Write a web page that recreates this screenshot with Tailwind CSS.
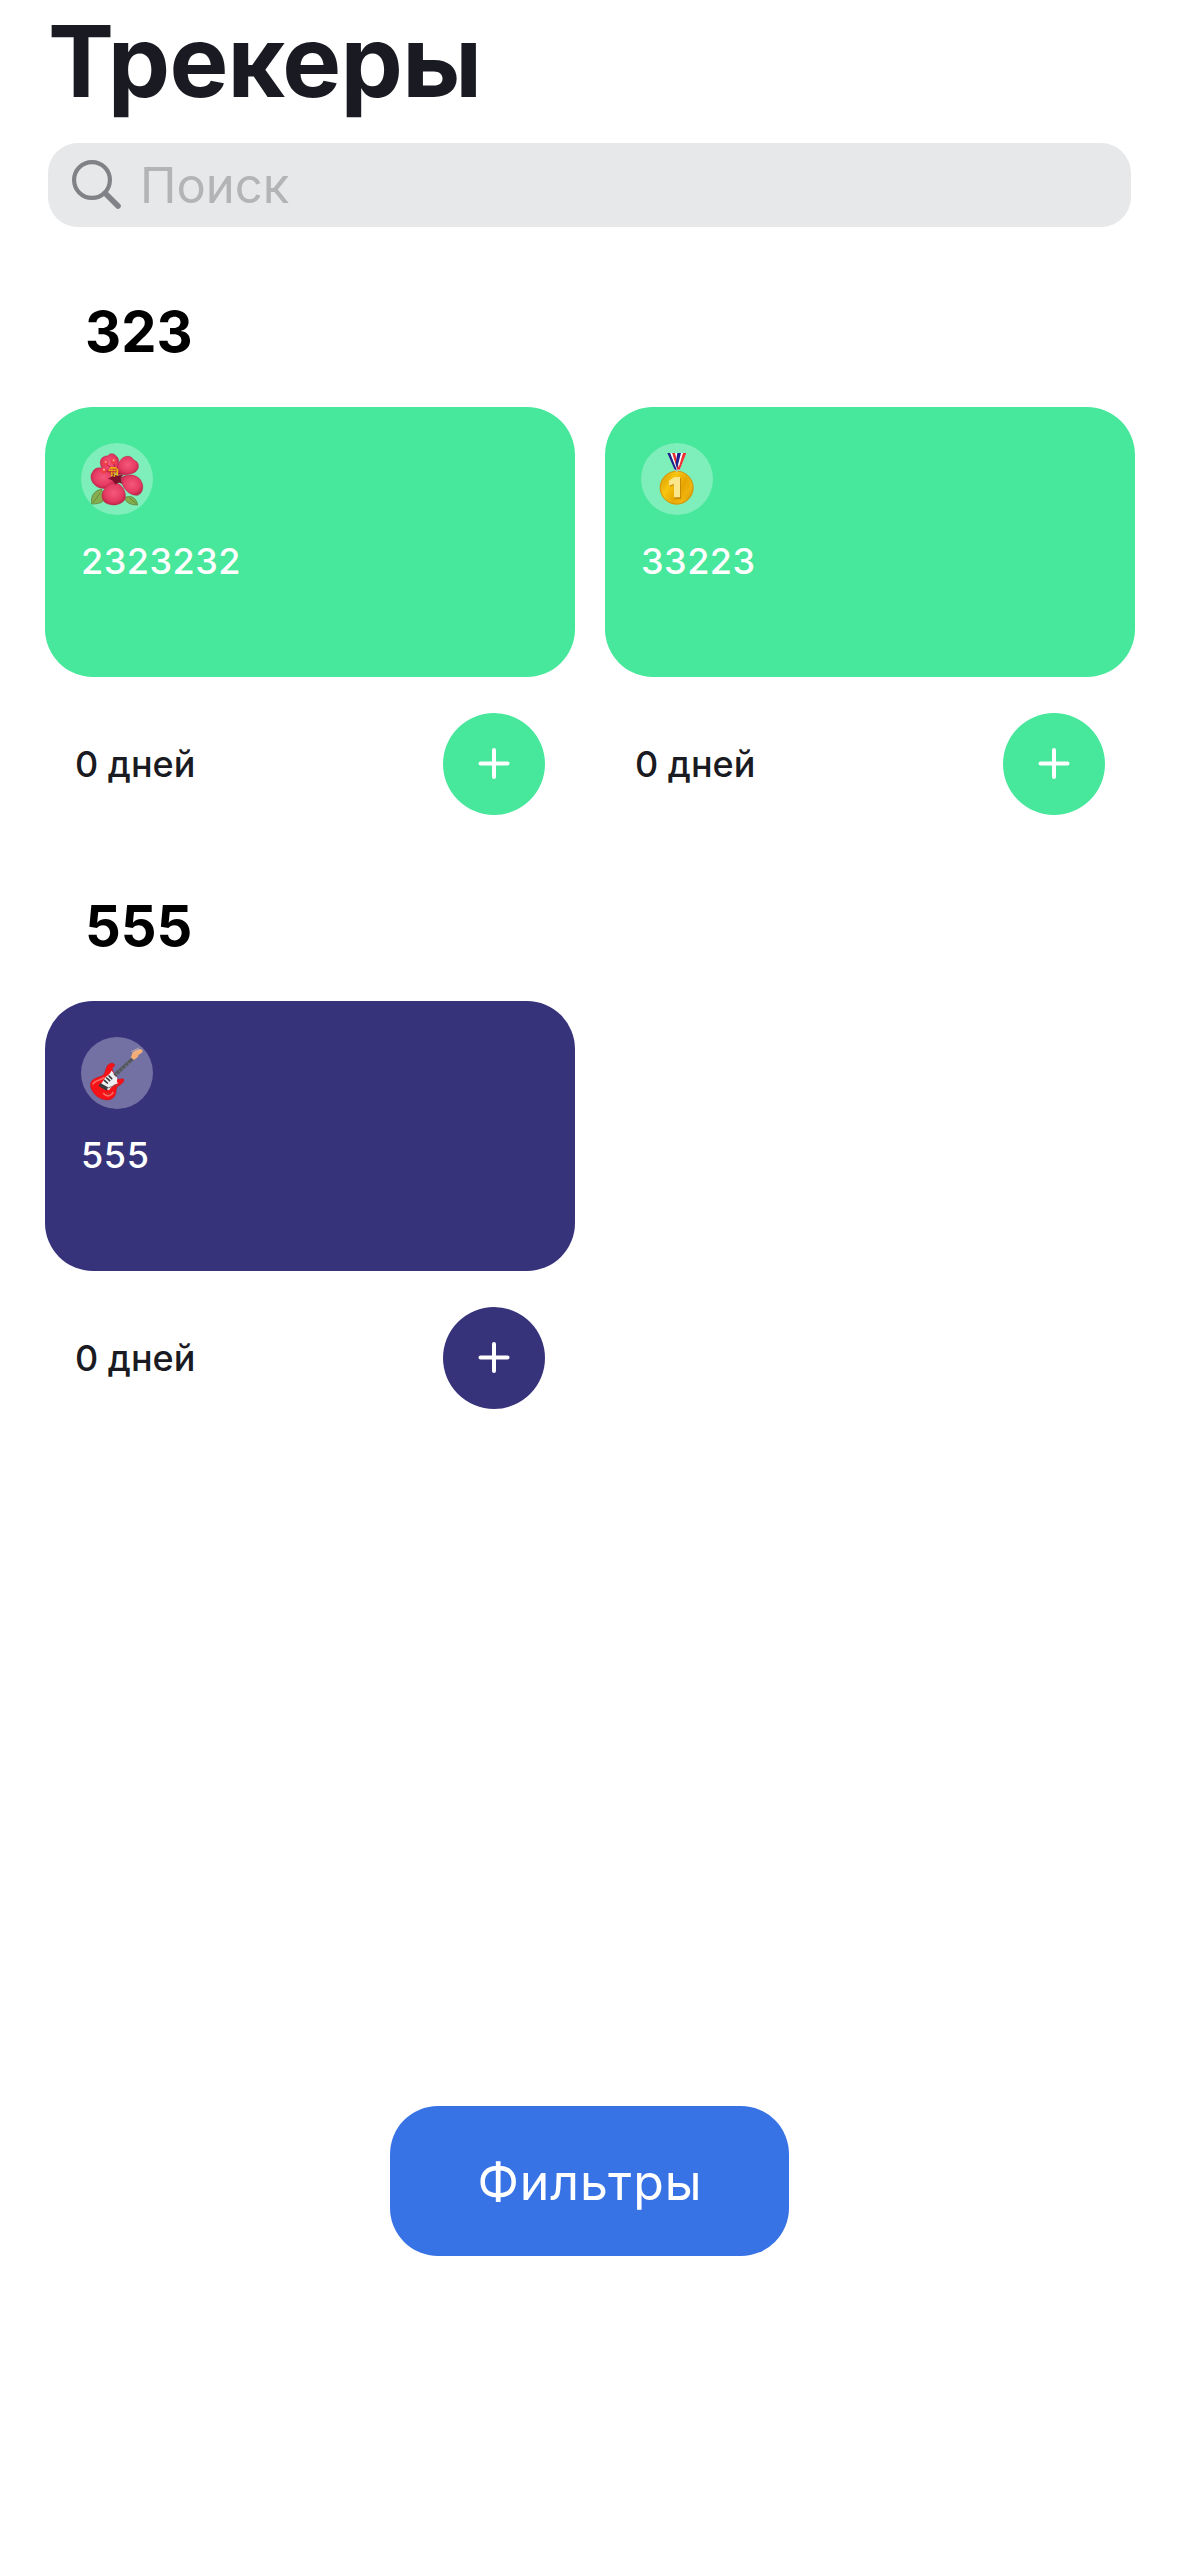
<!DOCTYPE html>
<html lang="ru">
<head>
<meta charset="utf-8">
<title>Трекеры</title>
<script src="https://cdn.jsdelivr.net/npm/@tailwindcss/browser@4"></script>
</head>
<body class="bg-white font-['Inter',sans-serif]">
<div class="flex h-[2556px] w-[1179px] flex-col overflow-hidden bg-white">
  <header class="px-12">
    <h1 class="h-[143px] pt-px text-[99px] leading-[120px] font-bold tracking-[-0.75px] text-[#1a1b22]">Трекеры</h1>
    <div class="flex h-[84px] items-center rounded-[30px] bg-[#e6e8e9] pl-[22px]">
      <svg class="size-[54px] shrink-0" viewBox="0 0 54 54" fill="none" stroke="#808287" stroke-linecap="round">
        <circle cx="22" cy="22" r="17.9" stroke-width="4.2"/>
        <path d="M35.2 35.2 48 48" stroke-width="5.6"/>
      </svg>
      <span class="ml-4 pt-0.5 text-[49px] leading-[60px] text-[#b2b4b6]">Поиск</span>
    </div>
  </header>

  <main class="flex-none">
    <section class="pr-11 pb-1.5 pl-[45px]">
      <h2 class="pt-[69px] pb-[39px] pl-10 text-[56px] leading-[72px] font-bold text-black">323</h2>
      <div class="grid grid-cols-2 gap-[30px]">
        <article>
          <div class="h-[270px] rounded-[48px] bg-[#47e79c] p-9">
            <svg class="size-[72px]" viewBox="18 24 216 216">
              <defs>
                <radialGradient id="petal" cx=".5" cy=".45" r=".6"><stop offset="0" stop-color="#f5587c"/><stop offset=".65" stop-color="#e53a62"/><stop offset="1" stop-color="#b81f45"/></radialGradient>
              </defs>
              <circle cx="126" cy="132" r="108" fill="#fff" fill-opacity=".3"/>
              <g fill="#86ad50" stroke="#55782f" stroke-width="2">
                <path d="M80 163C59 166 46 182 50 207 70 207 84 203 88 193Z"/>
                <path d="M148 188C165 181 183 184 188 210 169 210 153 204 148 188Z"/>
                <path d="M54 203 76 174M184 206 164 189" fill="none"/>
              </g>
              <g fill="url(#petal)" stroke="#b72149" stroke-width="1.5">
                <path d="M119 118C98 119 74 102 76 80 78 66 91 62 98 63 104 54 117 53 124 64 135 70 133 99 119 118Z"/>
                <path d="M126 119C123 95 134 69 151 65 164 61 173 68 176 75 190 79 194 94 187 104 180 118 150 121 126 119Z"/>
                <path d="M121 144C112 164 75 166 59 149 48 141 44 120 53 111 59 95 82 95 94 107 108 115 117 126 121 144Z"/>
                <path d="M138 128C162 113 193 120 200 142 208 158 201 177 187 181 164 183 139 159 138 128Z"/>
                <path d="M120 144C139 145 156 170 150 191 144 207 119 214 100 207 79 202 76 178 88 163 96 148 109 144 120 144Z"/>
              </g>
              <path d="M111 112C119 126 132 119 145 120 132 128 140 139 142 148 132 140 128 143 121 150 120 140 109 134 98 130 108 127 117 128 111 112Z" fill="#7e0f2d"/>
              <path d="M90 108 119 111M92 86 119 106M116 82 121 108" stroke="#b51d3d" stroke-width="3"/>
              <g fill="none" stroke="#e9b800" stroke-width="5" stroke-dasharray="5 3"><path d="M104 99H128M101 106H132M110 96V124M118 96V127M127 101V125M108 116H132"/></g>
              <g fill="#ee3f49"><circle cx="91" cy="84" r="8.5"/><circle cx="115" cy="79" r="8.5"/><circle cx="86" cy="107" r="8.5"/></g>
              <g fill="#ffa39c"><circle cx="92" cy="81" r="3.2"/><circle cx="116" cy="76" r="3.2"/><circle cx="87" cy="104" r="3.2"/></g>
            </svg>
            <p class="mt-6 text-[36px] leading-[44px] font-[450] tracking-[0.5px] text-white">2323232</p>
          </div>
          <div class="flex items-center justify-between px-[30px] pt-9">
            <span class="text-[36px] leading-[44px] font-medium text-[#1a1b22]">0 дней</span>
            <button class="flex size-[102px] items-center justify-center rounded-full bg-[#47e79c]">
              <svg class="size-9" viewBox="0 0 36 36" stroke="#fff" stroke-width="4" stroke-linecap="round"><path d="M4.5 17.5H31.5M18 4V31"/></svg>
            </button>
          </div>
        </article>
        <article>
          <div class="h-[270px] rounded-[48px] bg-[#47e79c] p-9">
            <svg class="size-[72px]" viewBox="18 24 216 216">
              <defs>
                <linearGradient id="gold" x1="0" y1=".2" x2="1" y2=".8"><stop offset="0" stop-color="#d99a00"/><stop offset=".3" stop-color="#f8c50e"/><stop offset=".6" stop-color="#e7a400"/><stop offset=".8" stop-color="#f0b20c"/><stop offset="1" stop-color="#d18b00"/></linearGradient>
              </defs>
              <circle cx="126" cy="132" r="108" fill="#fff" fill-opacity=".3"/>
              <path d="M112 54H154L133 104H126Z" fill="#fff"/>
              <path d="M111 54H120L133 104H126ZM144 54H154L134 104H129Z" fill="#ee2f31"/>
              <path d="M97 54H106L125 104H119ZM127 54H138L125 104H119Z" fill="#20208c"/>
              <path d="M106 54H111L127 104H125Z" fill="#fff"/>
              <circle cx="125" cy="158" r="49.5" fill="url(#gold)" stroke="#d49504" stroke-width="3"/>
              <circle cx="125" cy="157" r="44" fill="none" stroke="#f7cc34" stroke-opacity=".5" stroke-width="2"/>
              <path d="M118 104 125 110 133 104" fill="none" stroke="#c8ced0" stroke-width="3"/>
              <path d="M121 128H137V190H118V148L103 153V137Z" fill="#c78a06" transform="translate(1 2)"/>
              <path d="M119 126H135V187H117V147L102 152V137Z" fill="#fae78c"/>
            </svg>
            <p class="mt-6 text-[36px] leading-[44px] font-[450] tracking-[0.5px] text-white">33223</p>
          </div>
          <div class="flex items-center justify-between px-[30px] pt-9">
            <span class="text-[36px] leading-[44px] font-medium text-[#1a1b22]">0 дней</span>
            <button class="flex size-[102px] items-center justify-center rounded-full bg-[#47e79c]">
              <svg class="size-9" viewBox="0 0 36 36" stroke="#fff" stroke-width="4" stroke-linecap="round"><path d="M4.5 17.5H31.5M18 4V31"/></svg>
            </button>
          </div>
        </article>
      </div>
    </section>

    <section class="pr-11 pb-1.5 pl-[45px]">
      <h2 class="pt-[69px] pb-[39px] pl-10 text-[56px] leading-[72px] font-bold text-black">555</h2>
      <div class="grid grid-cols-2 gap-[30px]">
        <article>
          <div class="h-[270px] rounded-[48px] bg-[#37337b] p-9">
            <svg class="size-[72px]" viewBox="18 21 216 216">
              <circle cx="126" cy="129" r="108" fill="#fff" fill-opacity=".3"/>
              <path d="M64 190 69 199M62 194 70 191" stroke="#3d3a45" stroke-width="3"/>
              <path d="M107 100C116 98 120 103 119 108 108 112 112 124 119 133L128 148C138 150 141 143 146 148 149 155 139 163 130 168 120 174 127 186 119 198 111 211 94 213 76 205 57 196 44 176 47 160 50 145 69 143 82 137 94 132 89 106 107 100Z" fill="#f51318" stroke="#c90e18" stroke-width="1.5"/>
              <path d="M54 162C60 150 77 151 87 143M86 191C95 201 108 199 114 188" fill="none" stroke="#ff6a62" stroke-width="5" stroke-linecap="round"/>
              <path d="M109 122C118 128 115 135 125 141 130 147 122 155 130 160 115 162 110 173 101 181L73 166C83 159 86 147 93 140 101 134 105 132 109 122Z" fill="#eef0f2"/>
              <path d="M115 132 169 83 176 89 123 140Z" fill="#55585b"/>
              <path d="M123 129 128 135M131 121 137 127M140 113 146 119M149 105 155 111M158 97 164 103" stroke="#9a9c9f" stroke-width="1.5"/>
              <path d="M167 82C172 77 168 70 177 64 186 59 194 55 201 59 207 64 199 70 190 75 191 82 184 83 177 90Z" fill="#f3ad75"/>
              <path d="M168 65 193 53M174 69 196 58" stroke="#c9bdbc" stroke-width="2"/>
              <path d="M88 151 97 159M95 144 104 152M102 138 110 146" stroke="#34343b" stroke-width="5" stroke-linecap="round"/>
              <path d="M76 159 99 172 95 182 71 168Z" fill="#39393e"/>
              <path d="M99 174 128 163M98 188 104 195" stroke="#77595c" stroke-width="2.5"/>
            </svg>
            <p class="mt-6 text-[36px] leading-[44px] font-[450] tracking-[0.6px] text-white">555</p>
          </div>
          <div class="flex items-center justify-between px-[30px] pt-9">
            <span class="text-[36px] leading-[44px] font-medium text-[#1a1b22]">0 дней</span>
            <button class="flex size-[102px] items-center justify-center rounded-full bg-[#37337b]">
              <svg class="size-9" viewBox="0 0 36 36" stroke="#fff" stroke-width="4" stroke-linecap="round"><path d="M4.5 17.5H31.5M18 4V31"/></svg>
            </button>
          </div>
        </article>
      </div>
    </section>
  </main>

  <button class="mt-auto mb-[300px] ml-[390px] flex h-[150px] w-[399px] items-center justify-center rounded-[48px] bg-[#3873e6] pt-px pl-px text-[50px] leading-[60px] tracking-[1px] text-white">Фильтры</button>
</div>
</body>
</html>
